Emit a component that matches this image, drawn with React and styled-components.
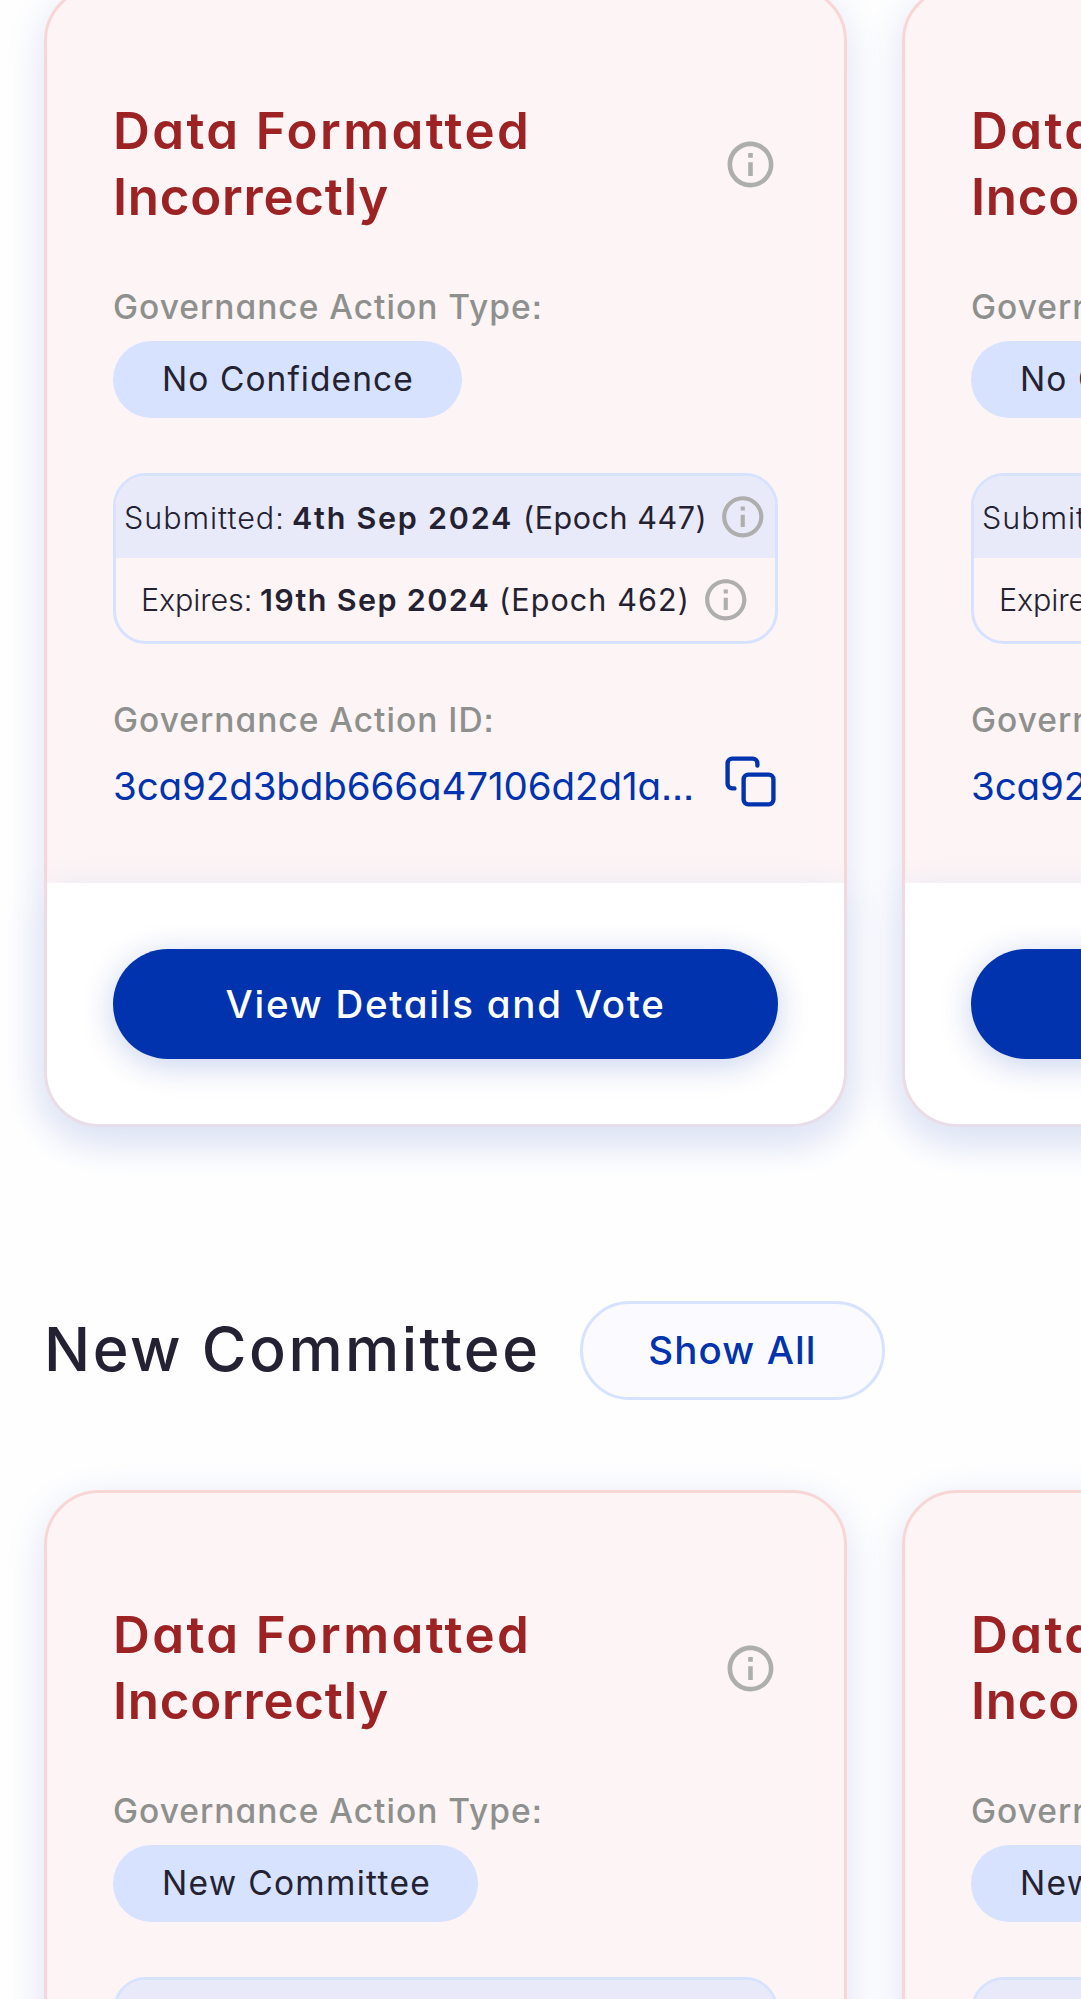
import React from "react";
import styled, { createGlobalStyle } from "styled-components";

const GlobalStyle = createGlobalStyle`
  *, *::before, *::after { box-sizing: border-box; }
  body {
    margin: 0;
    background: #fff;
    font-family: Inter, "Open Sans", sans-serif;
    font-feature-settings: "cv11", "ss07";
    color: #242232;
  }
  h2, h3, p { margin: 0; }
`;

const Page = styled.main`
  height: 1999px;
  overflow: hidden;
  background: #fefefe;
`;

const Section = styled.section`
  margin-top: ${(p) => p.$offset || 0}px;
`;

const SectionHeader = styled.header`
  display: flex;
  align-items: center;
  gap: 43px;
  height: 99px;
  margin: 174px 0 90px;
  padding-left: 44px;
`;

const SectionTitle = styled.h2`
  width: 493px;
  padding-bottom: 3px;
  font-size: 61px;
  font-weight: 500;
  line-height: 96px;
  letter-spacing: 2.5px;
  white-space: nowrap;
`;

const ShowAll = styled.button`
  width: 305px;
  height: 99px;
  padding: 0 0 1px;
  border: 3px solid #d6e2ff;
  border-radius: 50px;
  background: #fbfbff;
  color: #0033ad;
  font: inherit;
  font-size: 38.5px;
  font-weight: 500;
  letter-spacing: 1.1px;
`;

const Slider = styled.div`
  display: flex;
  gap: 55px;
  padding-left: 44px;
`;

const Card = styled.article`
  flex: none;
  width: 803px;
  height: 1141px;
  display: flex;
  flex-direction: column;
  border: 3px solid #f8d6d6;
  border-radius: 55px;
  background: #fdf4f5;
  box-shadow: 0 11px 41px #dde3f5;
`;

const CardBody = styled.div`
  flex: 1;
  display: flex;
  flex-direction: column;
  align-items: flex-start;
  padding: 109px 66px 0;
`;

const TitleRow = styled.div`
  align-self: stretch;
  display: flex;
  align-items: center;
  justify-content: space-between;
  height: 132px;
  margin-bottom: 52px;
`;

const Title = styled.h3`
  width: 560px;
  color: #9c2224;
  font-size: 51px;
  font-weight: 600;
  line-height: 66px;
`;

const TitlePart = styled.span`
  letter-spacing: ${(p) => p.$track}px;
`;

const Label = styled.p`
  height: 50px;
  color: #8e908e;
  font-size: 33.5px;
  font-weight: 500;
  line-height: 50px;
  letter-spacing: 1px;
  white-space: nowrap;
`;

const TypePill = styled.div`
  width: ${(p) => p.$width}px;
  height: 77px;
  margin: 9px 0 55px;
  padding-left: 49px;
  border-radius: 39px;
  background: #d6e2ff;
  font-size: 33.5px;
  line-height: 77px;
  letter-spacing: ${(p) => p.$track}px;
  white-space: nowrap;
`;

const Dates = styled.div`
  align-self: stretch;
  height: 171px;
  margin-bottom: 51px;
  border: 3px solid #d6e2ff;
  border-radius: 33px;
  overflow: hidden;
`;

const DateRow = styled.div`
  display: flex;
  align-items: center;
  height: ${(p) => (p.$tinted ? 82 : 83)}px;
  padding-left: ${(p) => p.$indent}px;
  background: ${(p) => (p.$tinted ? "#e8eaf9" : "transparent")};
  font-size: 30.5px;
  white-space: nowrap;
`;

const DatePart = styled.span`
  flex: none;
  width: ${(p) => p.$width}px;
  font-weight: ${(p) => p.$weight};
  letter-spacing: ${(p) => p.$track}px;
`;

const IdRow = styled.div`
  align-self: stretch;
  display: flex;
  align-items: center;
  justify-content: space-between;
  height: 55px;
  margin-top: 9px;
`;

const IdText = styled.span`
  padding-top: 9px;
  color: #0033ad;
  font-size: 38.5px;
  line-height: 55px;
  letter-spacing: -0.1px;
  white-space: nowrap;
`;

const CardFooter = styled.footer`
  height: 241px;
  padding: 66px 66px 0;
  border-radius: 0 0 52px 52px;
  background: #fff;
  box-shadow: 0 11px 41px #dde3f5;
`;

const VoteButton = styled.button`
  display: block;
  width: 100%;
  height: 110px;
  padding: 0;
  border: 0;
  border-radius: 55px;
  background: #0033ad;
  box-shadow: 0 6px 33px rgba(0, 51, 173, 0.22);
  color: #fff;
  font: inherit;
  font-size: 38.5px;
  font-weight: 500;
  letter-spacing: 1.75px;
`;

const Icon = styled.svg`
  flex: none;
  display: block;
  width: ${(p) => p.$size}px;
  height: ${(p) => p.$size}px;
`;

const InfoIcon = ({ size }) => (
  <Icon $size={size} viewBox="0 0 24 24" fill="#adaead">
    <path d="M11 7h2v2h-2zm0 4h2v6h-2zm1-9C6.48 2 2 6.48 2 12s4.48 10 10 10 10-4.48 10-10S17.52 2 12 2m0 18c-4.41 0-8-3.59-8-8s3.59-8 8-8 8 3.59 8 8-3.59 8-8 8" />
  </Icon>
);

const CopyIcon = () => (
  <Icon
    $size={55}
    viewBox="0 0 24 24"
    fill="none"
    stroke="#0033ad"
    strokeWidth="1.9"
    strokeLinecap="round"
    strokeLinejoin="round"
  >
    <rect x="9" y="9" width="13" height="13" rx="2" />
    <path d="M5 15H4a2 2 0 0 1-2-2V4a2 2 0 0 1 2-2h9a2 2 0 0 1 2 2v1" />
  </Icon>
);

const dates = [
  {
    name: "Submitted:",
    date: "4th Sep 2024",
    epoch: "(Epoch 447)",
    indent: 8,
    widths: [168, 231, 195],
    tracks: [0.95, 1.75, 0.55],
    tinted: true,
  },
  {
    name: "Expires:",
    date: "19th Sep 2024",
    epoch: "(Epoch 462)",
    indent: 25,
    widths: [119, 239, 202],
    tracks: [-0.15, 1.35, 1.1],
  },
];

const types = {
  "No Confidence": { width: 349, track: 1.05 },
  "New Committee": { width: 365, track: 1.3 },
};

const ActionCard = ({ type }) => (
  <Card>
    <CardBody>
      <TitleRow>
        <Title>
          <TitlePart $track={2.4}>Data Formatted </TitlePart>
          <TitlePart $track={0.75}>Incorrectly</TitlePart>
        </Title>
        <InfoIcon size={55} />
      </TitleRow>
      <Label>Governance Action Type:</Label>
      <TypePill $width={types[type].width} $track={types[type].track}>
        {type}
      </TypePill>
      <Dates>
        {dates.map((d) => (
          <DateRow key={d.name} $tinted={d.tinted} $indent={d.indent}>
            <DatePart $width={d.widths[0]} $track={d.tracks[0]} $weight={300}>
              {d.name}
            </DatePart>
            <DatePart $width={d.widths[1]} $track={d.tracks[1]} $weight={600}>
              {d.date}
            </DatePart>
            <DatePart $width={d.widths[2]} $track={d.tracks[2]} $weight={400}>
              {d.epoch}
            </DatePart>
            <InfoIcon size={49.5} />
          </DateRow>
        ))}
      </Dates>
      <Label>Governance Action ID:</Label>
      <IdRow>
        <IdText>3ca92d3bdb666a47106d2d1a...</IdText>
        <CopyIcon />
      </IdRow>
    </CardBody>
    <CardFooter>
      <VoteButton>View Details and Vote</VoteButton>
    </CardFooter>
  </Card>
);

const Cards = ({ type }) => (
  <Slider>
    <ActionCard type={type} />
    <ActionCard type={type} />
  </Slider>
);

export default function App() {
  return (
    <>
      <GlobalStyle />
      <Page>
        <Section $offset={-14}>
          <Cards type="No Confidence" />
        </Section>
        <Section>
          <SectionHeader>
            <SectionTitle>New Committee</SectionTitle>
            <ShowAll>Show All</ShowAll>
          </SectionHeader>
          <Cards type="New Committee" />
        </Section>
      </Page>
    </>
  );
}
